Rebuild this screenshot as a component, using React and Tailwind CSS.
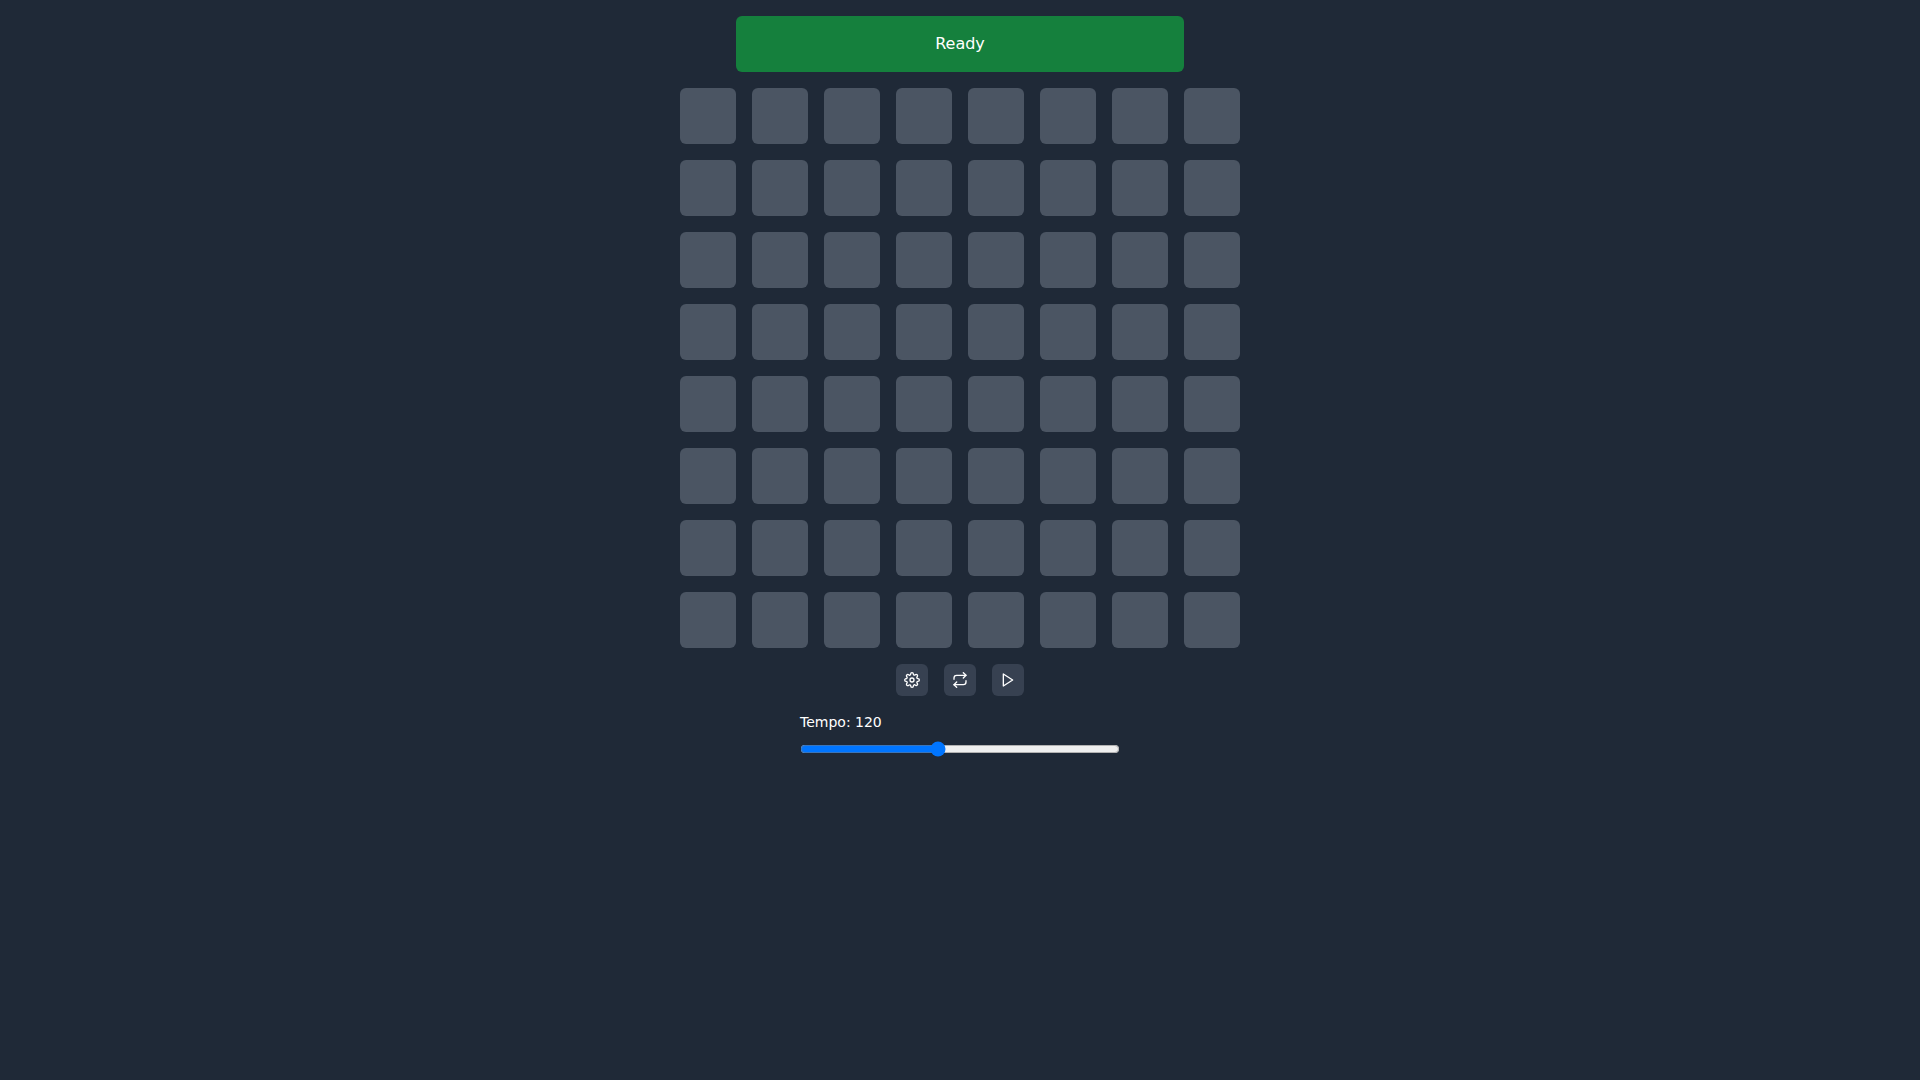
import React, { useState } from "react";
import { FiPlay, FiRepeat, FiSettings } from "react-icons/fi";

const ROWS = 8;
const COLS = 8;

const emptyGrid = () =>
  Array.from({ length: ROWS }, () => Array.from({ length: COLS }, () => false));

const ControlButton = ({ label, onClick, children }) => (
  <button
    type="button"
    aria-label={label}
    onClick={onClick}
    className="flex h-8 w-8 items-center justify-center rounded-md bg-[#374151] text-base cursor-pointer"
  >
    {children}
  </button>
);

const App = () => {
  const [grid, setGrid] = useState(emptyGrid);
  const [tempo, setTempo] = useState(120);

  const togglePad = (row, col) => {
    setGrid((prev) =>
      prev.map((pads, r) =>
        pads.map((on, c) => (r === row && c === col ? !on : on))
      )
    );
  };

  return (
    <div className="min-h-screen bg-[#1f2937] p-4 flex flex-col items-center gap-4 text-white font-['DejaVu_Sans',sans-serif]">
      {/* Status */}
      <button
        type="button"
        className="h-14 w-full max-w-md rounded-md bg-[#15803d] text-base cursor-pointer"
      >
        Ready
      </button>

      {/* Pads */}
      <div className="grid grid-cols-8 gap-4">
        {grid.map((pads, row) =>
          pads.map((on, col) => (
            <button
              key={`${row}-${col}`}
              type="button"
              aria-label={`Pad ${row + 1}, ${col + 1}`}
              aria-pressed={on}
              onClick={() => togglePad(row, col)}
              className={`h-14 w-14 rounded-md cursor-pointer ${on ? "bg-[#15803d]" : "bg-[#4b5563]"}`}
            />
          ))
        )}
      </div>

      {/* Controls */}
      <div className="flex gap-4">
        <ControlButton label="Settings">
          <FiSettings />
        </ControlButton>
        <ControlButton label="Reset" onClick={() => setGrid(emptyGrid())}>
          <FiRepeat />
        </ControlButton>
        <ControlButton label="Play">
          <FiPlay />
        </ControlButton>
      </div>

      <div className="flex w-full max-w-xs flex-col gap-[9px]">
        <label htmlFor="tempo" className="text-sm">
          Tempo: {tempo}
        </label>
        <input
          id="tempo"
          type="range"
          min="60"
          max="200"
          value={tempo}
          onChange={(e) => setTempo(Number(e.target.value))}
          className="w-full"
        />
      </div>
    </div>
  );
};

export default App;
